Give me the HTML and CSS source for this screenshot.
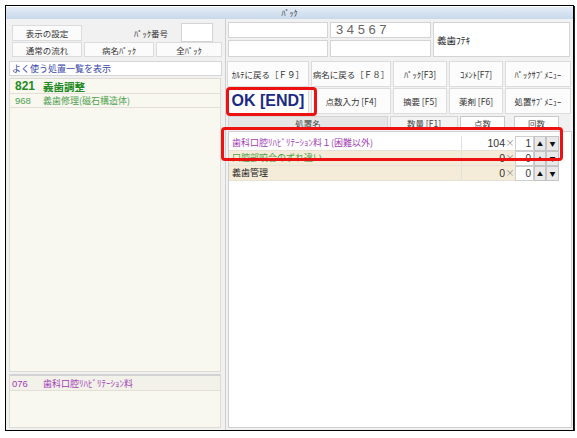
FILE: index.html
```html
<!DOCTYPE html>
<html lang="ja">
<head>
<meta charset="utf-8">
<title>パック</title>
<link rel="stylesheet" href="styles.css">
</head>
<body>
<div class="window">
  <div class="titlebar">ﾊﾟｯｸ</div>
  <div class="main">
    <div class="left">
      <div class="lrow lrow1">
        <div class="btn b70">表示の設定</div>
        <div class="lbl">ﾊﾟｯｸ番号</div>
        <div class="inp packno"></div>
      </div>
      <div class="lrow lrow2">
        <div class="btn b70">通常の流れ</div>
        <div class="btn b70">病名ﾊﾟｯｸ</div>
        <div class="btn b66">全ﾊﾟｯｸ</div>
      </div>
      <div class="often">よく使う処置一覧を表示</div>
      <div class="list mainlist">
        <div class="litem big"><span class="code">821</span><span>義歯調整</span></div>
        <div class="litem green"><span class="code">968</span><span>義歯修理(磁石構造体)</span></div>
      </div>
      <div class="list sublist">
        <div class="litem purple"><span class="code">076</span><span>歯科口腔ﾘﾊﾋﾞﾘﾃｰｼｮﾝ料</span></div>
      </div>
    </div>
    <div class="right">
      <div class="info">
        <div class="inp"></div>
        <div class="inp num">3 4 5 6 7</div>
        <div class="inp tall">義歯ﾌﾃｷ</div>
        <div class="inp"></div>
        <div class="inp"></div>
      </div>
      <div class="fkeys">
        <div class="btn">ｶﾙﾃに戻る［Ｆ９］</div>
        <div class="btn">病名に戻る［Ｆ８］</div>
        <div class="btn">ﾊﾟｯｸ[F3]</div>
        <div class="btn">ｺﾒﾝﾄ[F7]</div>
        <div class="btn">ﾊﾟｯｸｻﾌﾞﾒﾆｭｰ</div>
        <div class="btn ok">OK [END]</div>
        <div class="btn">点数入力 [F4]</div>
        <div class="btn">摘要 [F5]</div>
        <div class="btn">薬剤 [F6]</div>
        <div class="btn">処置ｻﾌﾞﾒﾆｭｰ</div>
      </div>
      <div class="thead">
        <div class="th th-name">処置名</div>
        <div class="th th-qty">数量 [F1]</div>
        <div class="th th-box th-pts">点数</div>
        <div class="th th-box th-cnt">回数</div>
      </div>
      <div class="tbody">
        <div class="trow">
          <div class="tname purple">歯科口腔ﾘﾊﾋﾞﾘﾃｰｼｮﾝ料１(困難以外)</div>
          <div class="tpts">104</div>
          <div class="tx">×</div>
          <div class="tcnt">1</div>
          <div class="arrow">▲</div>
          <div class="arrow">▼</div>
        </div>
        <div class="trow beige">
          <div class="tname green">口腔部咬合のずれ違い</div>
          <div class="tpts">0</div>
          <div class="tx">×</div>
          <div class="tcnt">0</div>
          <div class="arrow">▲</div>
          <div class="arrow">▼</div>
        </div>
        <div class="trow beige">
          <div class="tname dark">義歯管理</div>
          <div class="tpts">0</div>
          <div class="tx">×</div>
          <div class="tcnt">0</div>
          <div class="arrow">▲</div>
          <div class="arrow">▼</div>
        </div>
      </div>
    </div>
  </div>
  <div class="hl hl-ok"></div>
  <div class="hl hl-row"></div>
</div>
</body>
</html>
```

FILE: styles.css
```css
* { box-sizing: border-box; }

body {
  margin: 0;
  background: #ffffff;
  font-family: "Noto Sans CJK JP", "Liberation Sans", sans-serif;
  color: #333;
}

.window {
  position: relative;
  margin: 5px 0 0 5px;
  width: 569px;
  height: 426px;
  border: 1px solid #000;
  background: #f1f1f1;
  display: flex;
  flex-direction: column;
  box-shadow: 1px 1px 0 #222;
}

.titlebar {
  height: 13px;
  background: linear-gradient(#e3ecf6, #c8d8eb);
  border-top: 1px solid #fff;
  font-size: 8px;
  line-height: 12px;
  text-align: center;
  color: #333;
}

.main {
  flex: 1;
  display: flex;
  min-height: 0;
}

/* ---------- left ---------- */
.left {
  width: 220px;
  padding: 5px 3px 2px 3px;
  display: flex;
  flex-direction: column;
  border-right: 1px solid #cfcfcf;
}

.lrow {
  display: flex;
  align-items: center;
  padding-left: 3px;
}

.lrow1 { height: 17px; }
.lrow2 { height: 15px; margin-top: 1px; gap: 2px; }

.btn {
  background: #fbfbfb;
  border: 1px solid #dcdcdc;
  font-size: 8.5px;
  color: #333;
  display: flex;
  align-items: center;
  justify-content: center;
  white-space: nowrap;
  overflow: hidden;
}

.b70 { width: 70px; height: 100%; }
.lrow1 .b70 { height: 16px; }
.b66 { width: 66px; height: 100%; }

.lbl {
  width: 86px;
  text-align: right;
  font-size: 8.5px;
  margin-right: 13px;
}

.inp {
  background: #fff;
  border: 1px solid #d4d4d4;
}

.packno {
  width: 32px;
  height: 19px;
}

.often {
  margin-top: 4px;
  height: 15px;
  background: #fff;
  border: 1px solid #d6d6d6;
  font-size: 9px;
  line-height: 13px;
  padding-left: 2px;
  color: #3a48a8;
  margin-right: 0;
}

.list {
  background: #f8f7f0;
  border: 1px solid #dedbd0;
  margin-right: 1px;
}

.mainlist {
  margin-top: 2px;
  flex: 1;
}

.sublist {
  margin-top: 2px;
  height: 54px;
  border-top: 2px solid #d2d2d2;
}

.litem {
  display: flex;
  align-items: center;
  height: 14px;
  border-bottom: 1px solid #e2e0d4;
  font-size: 9px;
  padding-left: 5px;
}

.litem .code {
  width: 28px;
  font-family: "Liberation Sans", sans-serif;
  font-size: 9.5px;
}

.litem.big {
  height: 15px;
  font-weight: bold;
  font-size: 10.5px;
  color: #1f8a1f;
}

.litem.big .code {
  font-size: 12px;
  font-weight: bold;
}

.green { color: #4fa24f; }
.purple { color: #a23cb4; }
.dark { color: #222; }

.sublist .litem {
  height: 15px;
  padding-left: 2px;
  background: #f2f1ea;
}

.sublist .litem .code { width: 31px; }

/* ---------- right ---------- */
.right {
  flex: 1;
  padding: 3px 1px 2px 1px;
  display: flex;
  flex-direction: column;
}

.info {
  display: grid;
  grid-template-columns: 100px 101px 137px;
  grid-template-rows: 16px 17px;
  column-gap: 2px;
  row-gap: 2px;
  padding-left: 1px;
}

.info .tall {
  grid-column: 3;
  grid-row: 1 / span 2;
  font-size: 9.5px;
  display: flex;
  align-items: center;
  padding-left: 3px;
  color: #222;
}

.info .num {
  font-family: "Liberation Sans", sans-serif;
  font-size: 13px;
  line-height: 14px;
  color: #666;
  padding-left: 5px;
}

.fkeys {
  margin-top: 4px;
  display: grid;
  grid-template-columns: 82px 80px 54px 54px 66px;
  grid-template-rows: 26px 26px;
  gap: 1px 2px;
}

.fkeys .btn {
  font-size: 8.5px;
  background: #fcfcfc;
}

.fkeys .ok {
  font-family: "Liberation Sans", sans-serif;
  font-weight: bold;
  font-size: 16px;
  color: #1b2a82;
  background: #fff;
}

.thead {
  margin-top: 2px;
  height: 13px;
  display: flex;
  padding-left: 1px;
}

.th {
  font-size: 8.5px;
  line-height: 12px;
  text-align: center;
  color: #444;
  border: 1px solid #d4d4d4;
}

.th-name { width: 160px; background: #e6e6e6; }
.th-qty { width: 68px; margin-left: 2px; background: #f4f4f4; }
.th-box { background: #fff; border-color: #c8c8c8; }
.th-pts { width: 45px; margin-left: 2px; }
.th-cnt { width: 45px; margin-left: 9px; }

.tbody {
  margin-top: 2px;
  flex: 1;
  background: #fff;
  border: 1px solid #cfcfcf;
  padding-top: 4px;
  margin-left: 1px;
}

.trow {
  display: flex;
  height: 15px;
  padding-right: 12px;
  font-size: 9px;
}

.tname {
  flex: 1;
  padding-left: 3px;
  line-height: 14px;
  border-bottom: 1px solid #e6e2d6;
  white-space: nowrap;
  overflow: hidden;
}

.tpts {
  width: 44px;
  text-align: right;
  font-family: "Liberation Sans", sans-serif;
  font-size: 10.5px;
  line-height: 14px;
  color: #333;
  border-left: 1px solid #e0e0e0;
  border-bottom: 1px solid #e6e2d6;
}

.tx {
  width: 10px;
  text-align: center;
  font-size: 9px;
  line-height: 14px;
  color: #888;
  border-bottom: 1px solid #e6e2d6;
}

.tcnt {
  width: 19px;
  background: #fff;
  border: 1px solid #cfcfcf;
  text-align: right;
  padding-right: 2px;
  font-family: "Liberation Sans", sans-serif;
  font-size: 10px;
  line-height: 13px;
}

.arrow {
  width: 12px;
  background: #e9e9e9;
  border: 1px solid #c4c4c4;
  font-size: 6px;
  line-height: 13px;
  text-align: center;
  color: #111;
}

.arrow + .arrow { width: 13px; }

.beige .tname,
.beige .tpts,
.beige .tx { background: #f4ecd9; }

/* ---------- red annotations ---------- */
.hl {
  position: absolute;
  border: 3px solid #ee1111;
  border-radius: 4px;
}

.hl-ok {
  left: 220px;
  top: 81px;
  width: 91px;
  height: 29px;
}

.hl-row {
  left: 215px;
  top: 121px;
  width: 342px;
  height: 34px;
}
```
